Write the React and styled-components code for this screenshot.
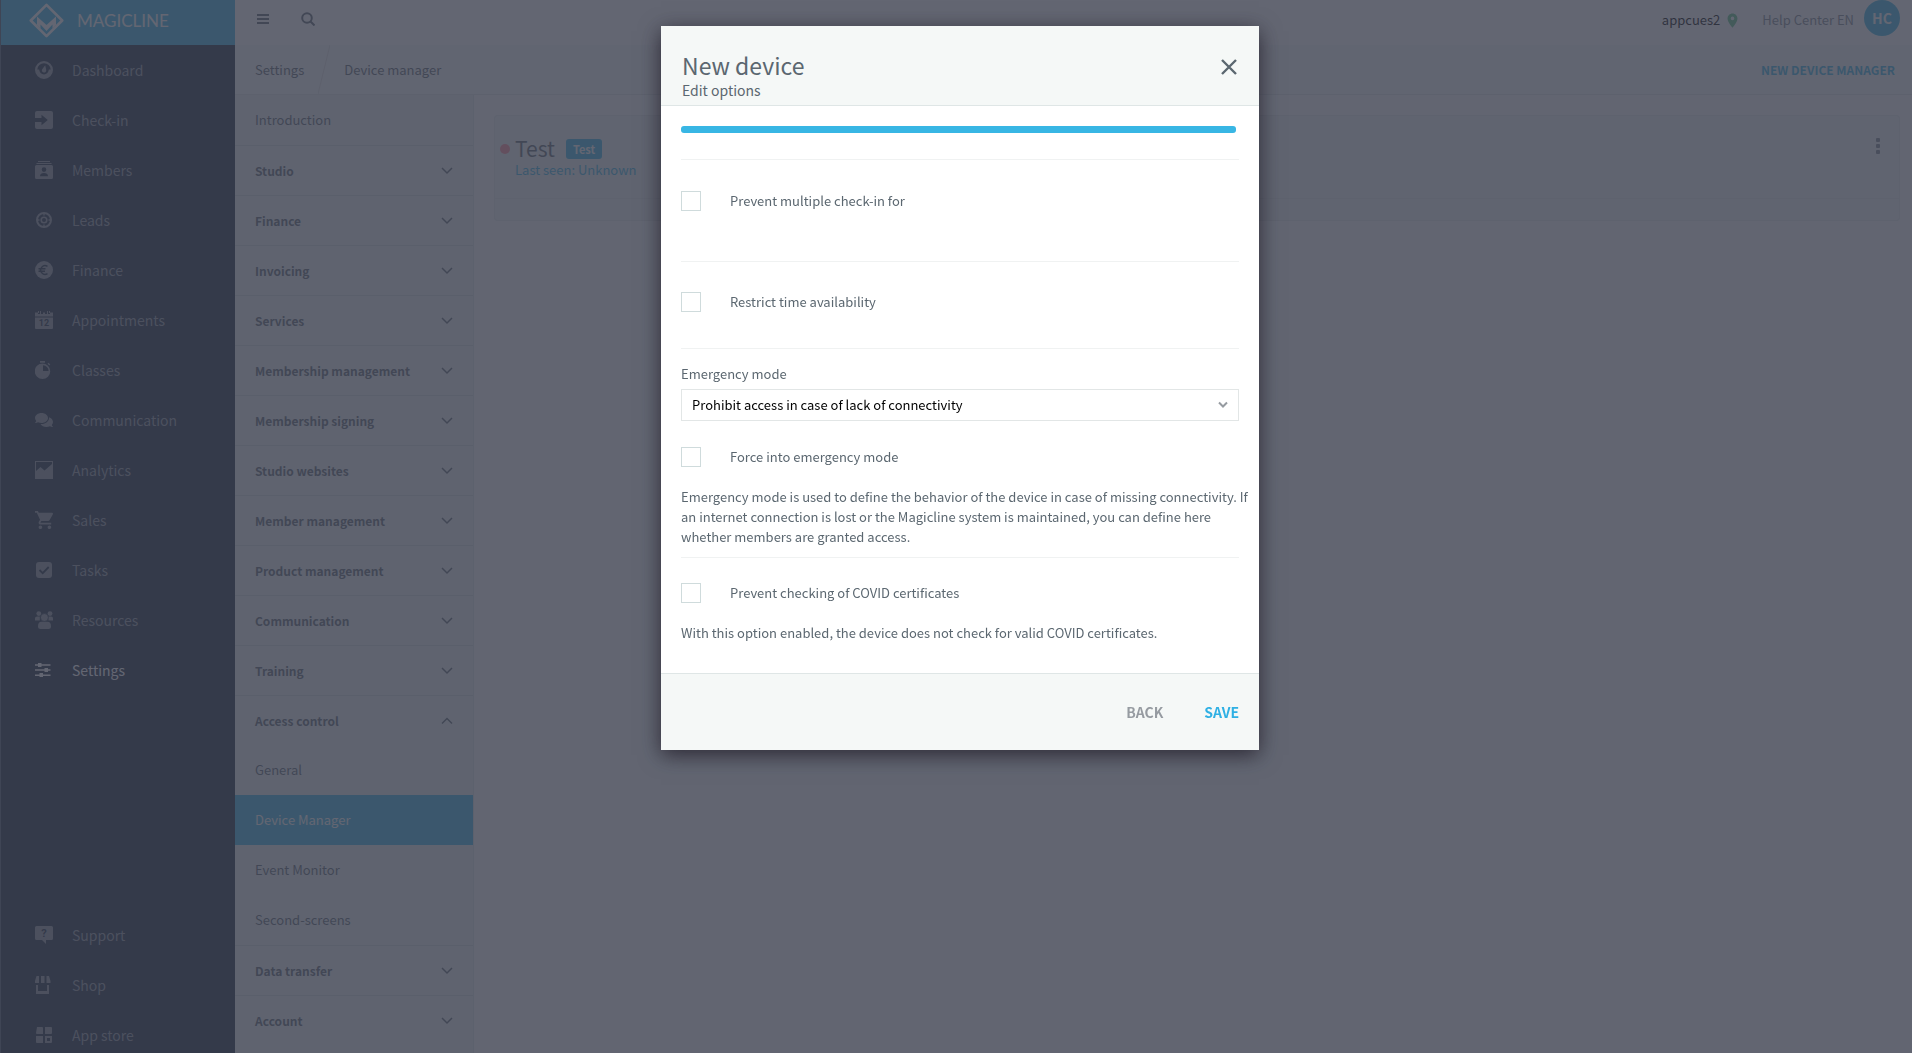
import React from 'react';
import styled, { createGlobalStyle, css } from 'styled-components';
import { FaComments } from 'react-icons/fa';
import { MdLocationOn } from 'react-icons/md';

const Global = createGlobalStyle`
  *, *::before, *::after { box-sizing: border-box; }
  html, body, #root { height: 100%; }
  body {
    margin: 0;
    overflow: hidden;
    font-family: "Noto Sans CJK SC", "Noto Sans", sans-serif;
    font-size: 13px;
    line-height: 20px;
    color: #5b6770;
    background: #ffffff;
  }
  button, input, select { font: inherit; color: inherit; }
  button { border: 0; padding: 0; background: none; cursor: pointer; }
  a { color: inherit; text-decoration: none; }
  h1, h2, p, ul { margin: 0; padding: 0; font-weight: 400; }
  ul { list-style: none; }
`;

const Page = styled.div`
  display: flex;
  height: 100vh;
  overflow: hidden;
`;

const Sidebar = styled.nav`
  display: flex;
  flex-direction: column;
  flex: none;
  width: 235px;
  background: #14243a;
  border-left: 1px solid #4a5a6e;
  overflow: hidden;
`;

const Brand = styled.a`
  display: flex;
  align-items: center;
  flex: none;
  gap: 13px;
  height: 45px;
  padding: 0 0 4px 28px;
  background: #38b6e4;
  color: #ffffff;
  font-family: Lato, sans-serif;
  font-size: 17px;
`;

const NavList = styled.ul`
  flex: ${(p) => (p.$grow ? 1 : 'none')};
`;

const NavLink = styled.a`
  display: flex;
  align-items: center;
  gap: 19px;
  height: 50px;
  padding-left: 34px;
  font-size: 14px;
  color: ${(p) => (p.$active ? '#ffffff' : '#8b939c')};
  svg { flex: none; width: 18px; height: 18px; }
`;

const BottomNav = styled.div`
  flex: none;
  margin-bottom: -7px;
`;

const Main = styled.div`
  display: flex;
  flex-direction: column;
  flex: 1;
  min-width: 0;
`;

const TopBar = styled.header`
  display: flex;
  align-items: center;
  flex: none;
  height: 45px;
  padding: 0 12px 9px 18px;
`;

const IconButton = styled.button`
  display: flex;
  align-items: center;
  justify-content: center;
  width: 20px;
  height: 20px;
  margin: 2px 25px 0 0;
`;

const Studio = styled.button`
  display: flex;
  align-items: center;
  gap: 4px;
  margin-left: auto;
  padding-top: 4px;
  color: #000000;
  svg { color: #5fc487; }
`;

const UserLink = styled.a`
  margin: 4px 10px 0 21px;
  color: #7d8790;
`;

const Avatar = styled.span`
  display: flex;
  align-items: center;
  justify-content: center;
  width: 36px;
  height: 36px;
  border-radius: 50%;
  background: #38b6e4;
  color: #ffffff;
  font-size: 14px;
  font-weight: 700;
`;

const Breadcrumbs = styled.div`
  display: flex;
  align-items: center;
  flex: none;
  height: 50px;
  padding: 0 17px 0 20px;
  background: #f5f8f8;
  border-bottom: 1px solid #dfe6e6;
`;

const Slash = styled.svg`
  width: 12px;
  height: 49px;
  margin: 0 14px;
`;

const Create = styled.button`
  margin-left: auto;
  color: #38b6e4;
  font-size: 12px;
  font-weight: 700;
`;

const Columns = styled.div`
  display: flex;
  flex: 1;
  min-height: 0;
`;

const SettingsMenu = styled.aside`
  flex: none;
  width: 239px;
  overflow: hidden;
  background: #eaf0f0;
  border-right: 1px solid #dde5e5;
`;

const menuRow = css`
  display: flex;
  align-items: center;
  justify-content: space-between;
  width: 100%;
  height: 50px;
  padding: 0 20px;
`;

const MenuLink = styled.a`
  ${menuRow}
  background: ${(p) => (p.$active ? '#38b6e4' : 'transparent')};
  color: ${(p) => (p.$active ? '#ffffff' : 'inherit')};
`;

const MenuGroup = styled.button`
  ${menuRow}
  border-top: 1px solid #d3dcdc;
  font-size: 12px;
  font-weight: 700;
`;

const Content = styled.main`
  flex: 1;
  min-width: 0;
  padding: 20px 12px 20px 20px;
  background: #fafbfb;
`;

const Card = styled.article`
  height: 106px;
  border: 1px solid #e4eaea;
  border-radius: 3px;
  background: #eef3f3;
`;

const CardBody = styled.div`
  display: flex;
  height: 83px;
  padding: 20px 19px 0 5px;
  border-bottom: 1px solid #e4eaea;
`;

const Status = styled.span`
  flex: none;
  width: 10px;
  height: 10px;
  margin: 8px 5px 0 0;
  border-radius: 50%;
  background: #ff8c9c;
`;

const CardTitle = styled.div`
  display: flex;
  align-items: flex-start;
  gap: 11px;
  height: 26px;
  h2 { font-size: 21px; line-height: 24px; }
`;

const Badge = styled.span`
  height: 20px;
  margin-top: 3px;
  padding: 0 7px;
  border-radius: 3px;
  background: #38b6e4;
  color: #ffffff;
  font-size: 11px;
  font-weight: 700;
`;

const LastSeen = styled.p`
  color: #38b6e4;
  line-height: 16px;
`;

const Kebab = styled.button`
  display: flex;
  flex-direction: column;
  align-items: center;
  gap: 2px;
  height: 20px;
  margin: 2px 0 0 auto;
  i { width: 4px; height: 4px; border-radius: 1px; background: #7d8790; }
`;

const Overlay = styled.div`
  position: fixed;
  inset: 0;
  display: flex;
  align-items: flex-start;
  justify-content: center;
  padding: 26px 0 26px 8px;
  background: rgba(60, 64, 79, 0.8);
`;

const Dialog = styled.section`
  width: 598px;
  background: #ffffff;
  box-shadow: 0 5px 20px rgba(24, 20, 32, 0.75);
`;

const DialogHeader = styled.header`
  display: flex;
  align-items: flex-start;
  justify-content: space-between;
  height: 80px;
  padding: 24px 20px 0 21px;
  background: #f5f8f7;
  border-bottom: 1px solid #dfe6e6;
  h1 { font-size: 23px; line-height: 30px; }
  p { font-size: 14px; line-height: 20px; }
`;

const Close = styled.button`
  display: flex;
  padding: 7px 0;
`;

const DialogBody = styled.div`
  padding: 20px 20px 0;
`;

const Progress = styled.div`
  height: 7px;
  margin: 0 3px 26px 0;
  border-radius: 3px;
  background: #38b6e4;
`;

const Section = styled.div`
  min-height: ${(p) => p.$height}px;
  padding-top: ${(p) => p.$top}px;
  border-top: 1px solid #f0f2f2;
`;

const CheckRow = styled.label`
  display: flex;
  align-items: center;
  gap: 29px;
  height: 20px;
  input {
    appearance: none;
    width: 20px;
    height: 20px;
    margin: 0;
    border: 1px solid #cfdbdc;
    background: #ffffff;
  }
`;

const FieldLabel = styled.label`
  display: block;
  margin-bottom: 5px;
`;

const SelectBox = styled.div`
  display: grid;
  align-items: center;
  margin-bottom: 26px;
  select, svg { grid-area: 1 / 1; }
  select {
    appearance: none;
    width: 100%;
    height: 32px;
    padding: 0 32px 0 10px;
    border: 1px solid #e2e6e6;
    border-radius: 0;
    background: #ffffff;
    color: #000000;
  }
  svg { justify-self: end; margin-right: 11px; pointer-events: none; }
`;

const Help = styled.p`
  margin-right: -10px;
  padding-top: 20px;
`;

const DialogFooter = styled.footer`
  display: flex;
  align-items: center;
  justify-content: flex-end;
  gap: 41px;
  height: 77px;
  padding: 0 20px;
  background: #f5f8f7;
  border-top: 1px solid #dfe6e6;
`;

const Action = styled.button`
  font-size: 14px;
  font-weight: 700;
  color: ${(p) => (p.$primary ? '#2fb0e4' : '#969ba1')};
`;

const Icon = ({ children, box = '0 0 18 18' }) => (
  <svg viewBox={box} fill="currentColor" aria-hidden="true">{children}</svg>
);

const icons = {
  Dashboard: (
    <Icon>
      <path fillRule="evenodd" d="M9 0a9 9 0 1 1 0 18A9 9 0 0 1 9 0Zm0 2.300A6.700 6.700 0 0 0 2.300 8.600h1.900A5 5 0 0 0 9 13.500a5 5 0 0 0 4.800-4.900h1.900A6.700 6.700 0 0 0 9 2.300Z" />
      <path d="M10.200 4.300 11.200 9a2.200 2.200 0 1 1-4-.8Z" />
    </Icon>
  ),
  'Check-in': (
    <Icon>
      <path fillRule="evenodd" d="M2 0h14a2 2 0 0 1 2 2v14a2 2 0 0 1-2 2H2a2 2 0 0 1-2-2v-5h6.500v3.200L12.800 9 6.500 3.800V7H0V2a2 2 0 0 1 2-2Z" />
    </Icon>
  ),
  Members: (
    <Icon>
      <path d="M3 0h12v1H3zM1.500 2h15v1h-15z" />
      <path fillRule="evenodd" d="M1.500 4h15A1.500 1.500 0 0 1 18 5.500v11a1.500 1.500 0 0 1-1.500 1.500h-15A1.500 1.500 0 0 1 0 16.500v-11A1.500 1.500 0 0 1 1.500 4ZM9 6.300a2.300 2.300 0 1 0 0 4.600 2.300 2.300 0 0 0 0-4.600ZM5 15.300h8c0-2.400-1.600-3.300-4-3.300s-4 .9-4 3.300Z" />
    </Icon>
  ),
  Leads: (
    <Icon>
      <circle cx="9" cy="9" r="7" fill="none" stroke="currentColor" strokeWidth="2" />
      <circle cx="9" cy="9" r="2.800" fill="none" stroke="currentColor" strokeWidth="1.600" />
      <path d="M8.300 2h1.400v2.500H8.300zM8.300 13.500h1.400V16H8.300zM2 8.300h2.500v1.400H2zM13.500 8.300H16v1.400h-2.500z" />
    </Icon>
  ),
  Finance: (
    <Icon>
      <circle cx="9" cy="9" r="9" />
      <path d="M12.500 5.300A4.400 4.400 0 1 0 12.500 12.700M3.500 7.800h7M3.500 10.200h6.500" fill="none" stroke="#14243a" strokeWidth="1.500" />
    </Icon>
  ),
  Appointments: (
    <Icon>
      <path d="M0 1.500h3V3h2V0h1v3h2V1.500h2V3h2V0h1v3h2V1.500h3v4H0zM3 0h1v2H3zM14 0h1v2h-1zM0 6.500h18V17a1 1 0 0 1-1 1H1a1 1 0 0 1-1-1z" />
      <text x="9" y="15" textAnchor="middle" fill="#14243a" fontSize="9" fontWeight="700" fontFamily="Roboto, sans-serif">12</text>
    </Icon>
  ),
  Classes: (
    <Icon>
      <path fillRule="evenodd" d="M7.500 2.500a7.750 7.750 0 1 1 0 15.500 7.750 7.750 0 0 1 0-15.500ZM8 4.300V10h5.600A5.800 5.800 0 0 0 8 4.300Z" />
      <path d="M5 0h5v1.800H5zM12.500 2.700l1-1 1.800 1.800-1 1z" />
    </Icon>
  ),
  Communication: <FaComments />,
  Analytics: (
    <Icon>
      <path fillRule="evenodd" d="M0 0h18v18H0zM1 1v9l4.500-4 4 3.500L17 3V1Z" />
    </Icon>
  ),
  Sales: (
    <Icon box="1 2 20 20">
      <path d="M7 18c-1.100 0-1.990.9-1.990 2S5.900 22 7 22s2-.9 2-2-.9-2-2-2zM1 2v2h2l3.600 7.590-1.350 2.450c-.16.280-.25.610-.25.960 0 1.100.9 2 2 2h12v-2H7.420c-.14 0-.25-.11-.25-.25l.03-.12.9-1.630h7.450c.75 0 1.410-.41 1.750-1.030l3.580-6.490c.08-.14.12-.31.12-.48 0-.55-.45-1-1-1H5.210l-.94-2H1zm16 16c-1.100 0-1.990.9-1.990 2s.89 2 1.990 2 2-.9 2-2-.9-2-2-2z" />
    </Icon>
  ),
  Tasks: (
    <Icon>
      <rect x="1" y="1" width="16" height="16" rx="3" />
      <path d="m4.500 9 3.200 3.200 6-6.200" fill="none" stroke="#14243a" strokeWidth="1.800" />
    </Icon>
  ),
  Resources: (
    <Icon>
      <circle cx="3.800" cy="2.600" r="2.400" /><circle cx="15" cy="2.600" r="2.400" />
      <path d="M0 9.500V7.700C0 6.300.8 5.500 2.200 5.500h2.600v4H3ZM18 9.500V7.700c0-1.400-.6-2.200-2-2.200h-2.600v4H16Z" />
      <path d="M3 15.500c0-3 1-4.700 3.500-4.700h6c2.500 0 3.500 1.700 3.500 4.700 0 1.700-1 2.500-2.500 2.500h-8C4 18 3 17.200 3 15.500Z" />
      <circle cx="9.400" cy="6.500" r="3.900" stroke="#14243a" strokeWidth=".6" />
    </Icon>
  ),
  Settings: (
    <Icon>
      <path d="M0 3.200h15.500v1.500H0zM0 8.300h15.500v1.500H0zM0 13.400h15.500v1.500H0z" />
      <path d="M3 2h3.500v4H3zM9.500 7H13v4H9.500zM4.500 12H8v4H4.500z" />
    </Icon>
  ),
  Support: (
    <Icon>
      <path d="M1.500 0h15A1.500 1.500 0 0 1 18 1.500v11a1.500 1.500 0 0 1-1.500 1.500H11v4l-4-4H1.500A1.500 1.500 0 0 1 0 12.500v-11A1.500 1.500 0 0 1 1.500 0Z" />
      <text x="9" y="11" textAnchor="middle" fill="#14243a" fontSize="11" fontWeight="700" fontFamily="Roboto, sans-serif">?</text>
    </Icon>
  ),
  Shop: (
    <Icon>
      <path d="M1.500 0H4v7H0V5ZM6 0h3.500v7H6zM11.500 0H14l1.500 5v2h-4zM1 9h2v6h9V9h2v9H1z" />
    </Icon>
  ),
  'App store': (
    <Icon>
      <path fillRule="evenodd" d="M2 1h5a1 1 0 0 1 1 1v6H2a1 1 0 0 1-1-1ZM10 1h6a1 1 0 0 1 1 1v5a1 1 0 0 1-1 1h-6ZM1 10h7v7H2a1 1 0 0 1-1-1ZM10 10h7v6a1 1 0 0 1-1 1h-6Zm2 2v3h3v-3Z" />
    </Icon>
  ),
};

const primaryNav = [
  'Dashboard', 'Check-in', 'Members', 'Leads', 'Finance', 'Appointments', 'Classes',
  'Communication', 'Analytics', 'Sales', 'Tasks', 'Resources', 'Settings',
];
const secondaryNav = ['Support', 'Shop', 'App store'];

const groups = [
  'Studio', 'Finance', 'Invoicing', 'Services', 'Membership management', 'Membership signing',
  'Studio websites', 'Member management', 'Product management', 'Communication', 'Training',
  'Access control', 'Data transfer', 'Account',
];
const accessItems = ['General', 'Device Manager', 'Event Monitor', 'Second-screens'];

const Chevron = ({ up }) => (
  <svg width="12" height="12" viewBox="0 0 12 12" fill="none" stroke="currentColor" strokeWidth="1.500" aria-hidden="true">
    <path d={up ? 'M1 8.500 6 3.500l5 5' : 'M1 3l5 5 5-5'} />
  </svg>
);

const NavItems = ({ names, active }) =>
  names.map((name) => (
    <li key={name}>
      <NavLink href="#" $active={name === active}>{icons[name]}{name}</NavLink>
    </li>
  ));

const Check = ({ children }) => (
  <CheckRow><input type="checkbox" />{children}</CheckRow>
);

export default function App() {
  return (
    <>
      <Global />
      <Page>
        <Sidebar>
          <Brand href="#">
            <svg width="35" height="35" viewBox="0 0 35 35" fill="none" stroke="currentColor" aria-hidden="true">
              <path d="M17.500 1.800 33.200 17.500 17.500 33.200 1.800 17.500Z" strokeWidth="2.600" strokeLinejoin="round" />
              <path d="M8 13.500l9.500 8.500 9.500-8.500v8.500l-3.500 3.500v-4l-6 6.500-6-6.500v4L8 22Z" fill="currentColor" stroke="none" />
            </svg>
            MAGICLINE
          </Brand>
          <NavList $grow><NavItems names={primaryNav} active="Settings" /></NavList>
          <BottomNav><NavList><NavItems names={secondaryNav} /></NavList></BottomNav>
        </Sidebar>
        <Main>
          <TopBar>
            <IconButton aria-label="Menu">
              <svg width="12" height="10" viewBox="0 0 12 10" fill="currentColor"><path d="M0 0h12v2H0zM0 4h12v2H0zM0 8h12v2H0z" /></svg>
            </IconButton>
            <IconButton aria-label="Search">
              <svg width="14" height="14" viewBox="0 0 14 14" fill="none" stroke="currentColor" strokeWidth="2"><circle cx="6" cy="6" r="4.800" /><path d="m9.500 9.500 4 4" /></svg>
            </IconButton>
            <Studio>appcues2<MdLocationOn size={17} /></Studio>
            <UserLink href="#">Help Center EN</UserLink>
            <Avatar>HC</Avatar>
          </TopBar>
          <Breadcrumbs>
            <a href="#">Settings</a>
            <Slash viewBox="0 0 12 49" stroke="#dfe0e0" aria-hidden="true"><path d="M12 0 0 49" /></Slash>
            <a href="#">Device manager</a>
            <Create>NEW DEVICE MANAGER</Create>
          </Breadcrumbs>
          <Columns>
            <SettingsMenu>
              <MenuLink href="#">Introduction</MenuLink>
              {groups.map((name) => {
                const open = name === 'Access control';
                return (
                  <React.Fragment key={name}>
                    <MenuGroup aria-expanded={open}>{name}<Chevron up={open} /></MenuGroup>
                    {open && accessItems.map((item) => (
                      <MenuLink key={item} href="#" $active={item === 'Device Manager'}>{item}</MenuLink>
                    ))}
                  </React.Fragment>
                );
              })}
            </SettingsMenu>
            <Content>
              <Card>
                <CardBody>
                  <Status />
                  <div>
                    <CardTitle><h2>Test</h2><Badge>Test</Badge></CardTitle>
                    <LastSeen>Last seen: Unknown</LastSeen>
                  </div>
                  <Kebab aria-label="Device actions"><i /><i /><i /></Kebab>
                </CardBody>
              </Card>
            </Content>
          </Columns>
        </Main>
      </Page>
      <Overlay>
        <Dialog role="dialog" aria-modal="true" aria-labelledby="dialog-title">
          <DialogHeader>
            <div>
              <h1 id="dialog-title">New device</h1>
              <p>Edit options</p>
            </div>
            <Close aria-label="Close">
              <svg width="20" height="20" viewBox="0 0 20 20" fill="none" stroke="currentColor" strokeWidth="2.400"><path d="m3 3 14 14m0-14-14 14" /></svg>
            </Close>
          </DialogHeader>
          <DialogBody>
            <Progress role="progressbar" aria-valuenow={100} aria-label="Setup progress" />
            <Section $height={102} $top={31}><Check>Prevent multiple check-in for</Check></Section>
            <Section $height={87} $top={30}><Check>Restrict time availability</Check></Section>
            <Section $height={209} $top={15}>
              <FieldLabel htmlFor="emergency-mode">Emergency mode</FieldLabel>
              <SelectBox>
                <select id="emergency-mode">
                  <option>Prohibit access in case of lack of connectivity</option>
                </select>
                <svg width="10" height="8" viewBox="0 0 10 8" fill="none" stroke="#969ba1" strokeWidth="2"><path d="m1 1.500 4 4 4-4" /></svg>
              </SelectBox>
              <Check>Force into emergency mode</Check>
              <Help>
                Emergency mode is used to define the behavior of the device in case of missing connectivity.
                If an internet connection is lost or the Magicline system is maintained, you can define here
                whether members are granted access.
              </Help>
            </Section>
            <Section $height={116} $top={25}>
              <Check>Prevent checking of COVID certificates</Check>
              <Help>With this option enabled, the device does not check for valid COVID certificates.</Help>
            </Section>
          </DialogBody>
          <DialogFooter>
            <Action>BACK</Action>
            <Action $primary>SAVE</Action>
          </DialogFooter>
        </Dialog>
      </Overlay>
    </>
  );
}
